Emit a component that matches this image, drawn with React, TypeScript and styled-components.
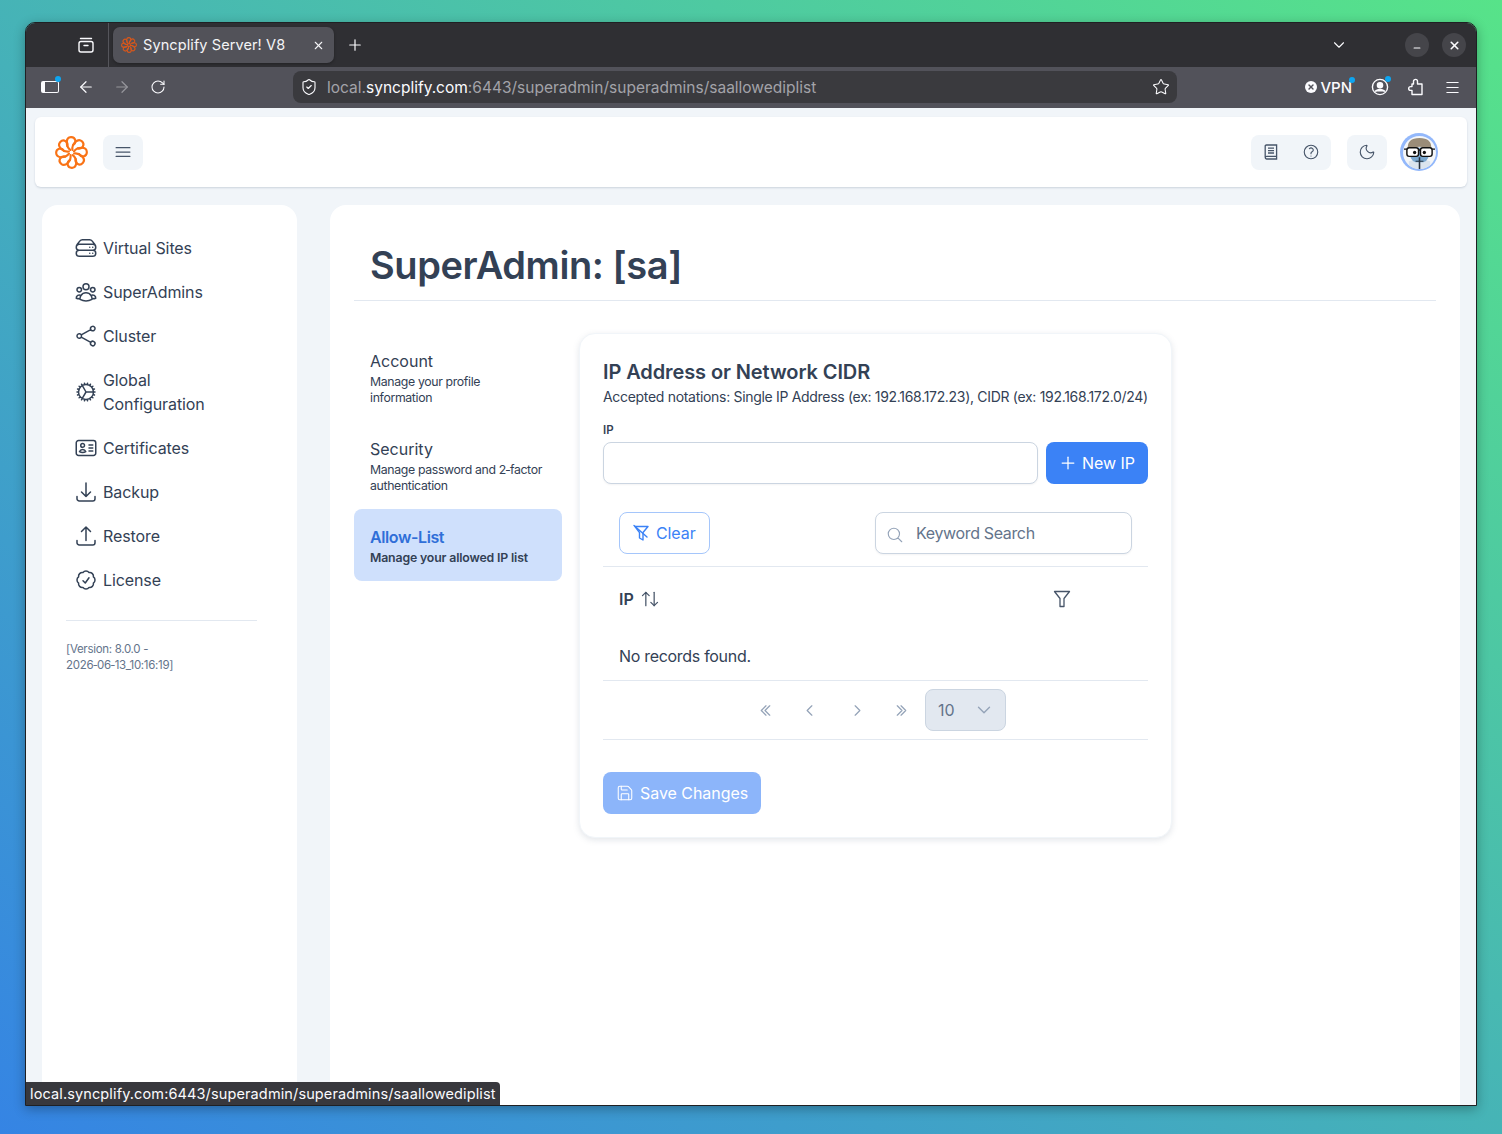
import React from 'react';
import styled, { createGlobalStyle } from 'styled-components';
import {
  ArrowLeft,
  ArrowRight,
  ArrowUpDown,
  ChevronDown,
  Menu,
  Minus,
  Moon,
  Plus,
  RotateCw,
  Save,
  ShieldCheck,
  Star,
  X,
} from 'lucide-react';
import {
  HiOutlineArrowDownTray,
  HiOutlineArrowUpTray,
  HiOutlineBars3,
  HiOutlineCheckBadge,
  HiOutlineChevronDoubleLeft,
  HiOutlineChevronDoubleRight,
  HiOutlineChevronLeft,
  HiOutlineChevronRight,
  HiOutlineCog,
  HiOutlineIdentification,
  HiOutlineMagnifyingGlass,
  HiOutlineQuestionMarkCircle,
  HiOutlineServerStack,
  HiOutlineShare,
  HiOutlineUserGroup,
} from 'react-icons/hi2';

const GlobalStyle = createGlobalStyle`
  html, body {
    margin: 0;
    padding: 0;
  }
  body {
    font-family: Inter, "Liberation Sans", sans-serif;
  }
`;

const Desktop = styled.div`
  box-sizing: border-box;
  width: 1502px;
  height: 1134px;
  padding: 22px 25px 28px;
  background: linear-gradient(to top right, #3584e4, #57e389);
`;

const Window = styled.div`
  position: relative;
  display: flex;
  flex-direction: column;
  height: 100%;
  border: 1px solid #1f2023;
  border-radius: 10px 10px 0 0;
  box-sizing: border-box;
  overflow: hidden;
  box-shadow: 0 3px 12px rgba(0, 0, 0, 0.3);
`;

const TabStrip = styled.div`
  display: flex;
  align-items: center;
  flex: 0 0 44px;
  padding-left: 51px;
  background: #2f2f33;
  color: #fbfbfe;
`;

const TabGroups = styled.div`
  display: flex;
  align-items: center;
  height: 100%;
  padding-right: 13px;
  border-right: 1px solid #55555b;
`;

const Tab = styled.div`
  display: flex;
  align-items: center;
  width: 221px;
  height: 36px;
  margin-left: 4px;
  padding: 0 9px 0 8px;
  box-sizing: border-box;
  border-radius: 7px;
  background: #525259;
  box-shadow: 0 1px 3px rgba(0, 0, 0, 0.3);
  font-size: 14.5px;
  color: #f4f4f6;
`;

const TabTitle = styled.span`
  flex: 1;
  margin-left: 6px;
  padding-bottom: 2px;
  letter-spacing: 0.1px;
`;

const NewTab = styled.div`
  display: flex;
  margin-left: 12px;
`;

const StripEnd = styled.div`
  display: flex;
  align-items: center;
  margin-left: auto;
  padding-right: 10px;
`;

const CaptionButton = styled.div`
  display: flex;
  align-items: center;
  justify-content: center;
  width: 24px;
  height: 24px;
  margin-left: 13px;
  border-radius: 50%;
  background: #45454a;
`;

const ListTabs = styled.div`
  display: flex;
  margin-right: 44px;
`;

const Toolbar = styled.div`
  display: flex;
  align-items: center;
  flex: 0 0 41px;
  box-sizing: border-box;
  padding: 0 14px 1px;
  background: #52525a;
  color: #fbfbfe;
`;

const NavGroup = styled.div`
  display: flex;
  align-items: center;
  gap: 16px;
`;

const NavIcon = styled.div<{ $dim?: boolean; $dot?: boolean }>`
  position: relative;
  display: flex;
  align-items: center;
  justify-content: center;
  width: 20px;
  height: 20px;
  opacity: ${({ $dim }) => ($dim ? 0.4 : 1)};
  &::after {
    content: '';
    display: ${({ $dot }) => ($dot ? 'block' : 'none')};
    position: absolute;
    top: -1px;
    right: -1px;
    width: 6px;
    height: 6px;
    border-radius: 50%;
    background: #0ea5f0;
  }
`;

const SidebarGlyph = styled.div`
  width: 13px;
  height: 10px;
  border: 1.6px solid #fbfbfe;
  border-left-width: 4px;
  border-radius: 2px;
`;

const UrlBar = styled.div`
  display: flex;
  align-items: center;
  width: 884px;
  height: 32px;
  margin-left: 125px;
  padding: 0 7px;
  box-sizing: border-box;
  border-radius: 8px;
  background: #3a3a3e;
  font-size: 15.5px;
  color: #fbfbfe;
`;

const UrlText = styled.div`
  flex: 1;
  margin-left: 9px;
  white-space: nowrap;
`;

const UrlDim = styled.span`
  color: #a3a3a9;
`;

const ToolbarEnd = styled.div`
  display: flex;
  align-items: center;
  margin-left: auto;
  gap: 16px;
`;

const VpnBadge = styled.div`
  position: relative;
  display: flex;
  align-items: center;
  gap: 3px;
  margin-right: 2px;
  font-size: 15px;
  font-weight: 500;
  &::after {
    content: '';
    position: absolute;
    top: -1px;
    right: -3px;
    width: 6px;
    height: 6px;
    border-radius: 50%;
    background: #0ea5f0;
  }
`;

const VpnMark = styled.span`
  display: flex;
  align-items: center;
  justify-content: center;
  width: 12px;
  height: 12px;
  border-radius: 50%;
  background: #fbfbfe;
  color: #52525a;
`;

const Content = styled.div`
  position: relative;
  flex: 1;
  min-height: 0;
  padding: 9px 9px 0;
  background: #f1f5f9;
  overflow: hidden;
  color: #334155;
`;

const TopBar = styled.header`
  display: flex;
  align-items: center;
  height: 70px;
  padding: 0 29px 0 20px;
  box-sizing: border-box;
  border-radius: 6px;
  background: #fff;
  box-shadow: 0 1px 2px rgba(100, 116, 139, 0.25);
`;

const IconTile = styled.div`
  display: flex;
  align-items: center;
  justify-content: center;
  height: 35px;
  min-width: 40px;
  border-radius: 8px;
  background: #f1f5f9;
  color: #475569;
`;

const LeftTile = styled(IconTile)`
  margin-left: 15px;
`;

const BarEnd = styled.div`
  display: flex;
  align-items: center;
  margin-left: auto;
  gap: 16px;
`;

const TileSlot = styled.div`
  display: flex;
  align-items: center;
  justify-content: center;
  width: 40px;
`;

const AvatarRing = styled.div`
  display: flex;
  width: 38px;
  height: 38px;
  margin-left: -3px;
  padding: 2.5px;
  box-sizing: border-box;
  border-radius: 50%;
  background: #93b8fb;
`;

const Panels = styled.div`
  display: flex;
  gap: 33px;
  height: 100%;
  margin-top: 18px;
  padding: 0 7px;
`;

const Sidebar = styled.aside`
  flex: 0 0 255px;
  box-sizing: border-box;
  padding: 21px 24px 0;
  border-radius: 16px 16px 0 0;
  background: #fff;
`;

const NavList = styled.nav`
  display: flex;
  flex-direction: column;
`;

const NavItem = styled.a`
  display: flex;
  align-items: center;
  gap: 5px;
  padding: 10px 0 10px 8px;
  font-size: 16px;
  line-height: 24px;
  letter-spacing: -0.1px;
  color: #334155;
`;

const NavGlyph = styled.span`
  display: flex;
  flex: none;
  width: 24px;
  color: #334155;
`;

const NavLabel = styled.span`
  width: 130px;
`;

const SideRule = styled.hr`
  width: 191px;
  margin: 18px 0 20px;
  border: 0;
  border-top: 1px solid #e2e8f0;
`;

const VersionNote = styled.div`
  width: 118px;
  font-size: 11.5px;
  line-height: 16px;
  letter-spacing: -0.3px;
  color: #64748b;
`;

const Main = styled.main`
  flex: 0 0 1130px;
  box-sizing: border-box;
  padding: 0 24px;
  border-radius: 16px 16px 0 0;
  background: #fff;
`;

const PageTitle = styled.h1`
  margin: 0;
  height: 96px;
  padding: 36px 16px 0;
  box-sizing: border-box;
  border-bottom: 1px solid #e2e8f0;
  font-size: 38px;
  font-weight: 600;
  line-height: 48px;
  letter-spacing: -0.42px;
  color: #334155;
`;

const Body = styled.div`
  display: flex;
  gap: 17px;
  margin-top: 32px;
`;

const SubMenu = styled.div`
  flex: 0 0 208px;
`;

const SubItem = styled.div<{ $active?: boolean }>`
  padding: 16px 16px 15px;
  border-radius: 8px;
  background: ${({ $active }) => ($active ? '#cfe0fc' : 'transparent')};
`;

const SubTitle = styled.div<{ $active?: boolean }>`
  font-size: 16px;
  line-height: 24px;
  font-weight: ${({ $active }) => ($active ? 600 : 400)};
  letter-spacing: ${({ $active }) => ($active ? '-0.4px' : '0')};
  color: ${({ $active }) => ($active ? '#2f6fd8' : '#334155')};
`;

const SubText = styled.div<{ $active?: boolean }>`
  max-width: 174px;
  margin-top: 1px;
  font-size: 12.3px;
  line-height: 16px;
  font-weight: ${({ $active }) => ($active ? 600 : 400)};
  letter-spacing: ${({ $active }) => ($active ? '-0.15px' : '-0.35px')};
  color: #334155;
`;

const Card = styled.section`
  flex: 0 0 593px;
  width: 593px;
  min-width: 0;
  box-sizing: border-box;
  padding: 23px;
  border: 1px solid #f1f5f9;
  border-radius: 16px;
  background: #fff;
  box-shadow: 0 2px 6px rgba(100, 116, 139, 0.18);
`;

const CardTitle = styled.h2`
  margin: 1px 0 0;
  font-size: 20px;
  font-weight: 600;
  line-height: 28px;
  letter-spacing: -0.1px;
  color: #334155;
`;

const CardNote = styled.p`
  margin: 0;
  font-size: 14px;
  line-height: 22px;
  letter-spacing: -0.31px;
  white-space: nowrap;
  color: #334155;
`;

const FieldLabel = styled.label`
  display: block;
  margin-top: 13px;
  font-size: 11.5px;
  font-weight: 600;
  line-height: 18px;
  color: #334155;
`;

const FieldRow = styled.div`
  display: flex;
  gap: 8px;
  margin-top: 3px;
`;

const TextInput = styled.input`
  flex: 1;
  min-width: 0;
  height: 42px;
  box-sizing: border-box;
  padding: 0 12px;
  border: 1px solid #cbd5e1;
  border-radius: 8px;
  background: #fff;
  box-shadow: 0 1px 2px rgba(15, 23, 42, 0.05);
  font: inherit;
  font-size: 16px;
  outline: none;
`;

const PrimaryButton = styled.button<{ $muted?: boolean }>`
  display: inline-flex;
  align-items: center;
  gap: ${({ $muted }) => ($muted ? '6px' : '4px')};
  height: 42px;
  padding: 0 13px 0 ${({ $muted }) => ($muted ? '13px' : '12px')};
  border: 0;
  border-radius: 8px;
  background: ${({ $muted }) => ($muted ? '#8cb5fa' : '#3b82f6')};
  color: #fff;
  font: inherit;
  font-size: 16px;
  letter-spacing: -0.05px;
`;

const TableTools = styled.div`
  display: flex;
  align-items: center;
  justify-content: space-between;
  height: 42px;
  margin-top: 28px;
  padding: 0 16px 12px;
  border-bottom: 1px solid #e2e8f0;
`;

const ClearButton = styled.button`
  display: inline-flex;
  align-items: center;
  gap: 6px;
  height: 42px;
  padding: 0 13px 0 12px;
  border: 1px solid #a5c6fb;
  border-radius: 8px;
  background: #fff;
  color: #3b82f6;
  font: inherit;
  font-size: 16px;
  letter-spacing: -0.1px;
`;

const SearchBox = styled.div`
  position: relative;
  width: 257px;
  color: #94a3b8;
`;

const SearchGlyph = styled.span`
  position: absolute;
  top: 14px;
  left: 11px;
  display: flex;
`;

const SearchInput = styled(TextInput)`
  width: 100%;
  padding-left: 40px;
  letter-spacing: -0.35px;
  &::placeholder {
    color: #64748b;
    opacity: 1;
  }
`;

const HeadRow = styled.div`
  display: flex;
  align-items: center;
  height: 63px;
  padding: 0 16px;
  font-size: 16px;
  font-weight: 600;
  color: #334155;
`;

const HeadLabel = styled.span`
  margin-right: 6px;
`;

const HeadFilter = styled.span`
  display: flex;
  margin-left: auto;
  margin-right: 61px;
  color: #475569;
`;

const EmptyRow = styled.div`
  height: 51px;
  padding: 14px 16px 0;
  box-sizing: border-box;
  border-bottom: 1px solid #e2e8f0;
  font-size: 16px;
  line-height: 24px;
  letter-spacing: -0.3px;
  color: #334155;
`;

const Pager = styled.div`
  display: flex;
  align-items: center;
  gap: 12px;
  height: 58px;
  padding-left: 146px;
  border-bottom: 1px solid #e2e8f0;
`;

const PagerButton = styled.span<{ $afterPages?: boolean }>`
  display: flex;
  align-items: center;
  justify-content: center;
  width: 32px;
  height: 32px;
  margin-left: ${({ $afterPages }) => ($afterPages ? '4px' : '0')};
  color: #94a3b8;
`;

const PageSize = styled.div`
  display: flex;
  align-items: center;
  justify-content: space-between;
  width: 81px;
  height: 42px;
  margin-left: -4px;
  padding: 0 10px 0 12px;
  box-sizing: border-box;
  border: 1px solid #cbd5e1;
  border-radius: 8px;
  background: #e2e8f0;
  font-size: 16px;
  color: #64748b;
`;

const SaveRow = styled.div`
  margin-top: 32px;
`;

const LinkStatus = styled.div`
  position: absolute;
  left: 0;
  bottom: 0;
  padding: 0 4px;
  height: 23px;
  border-radius: 0 4px 0 0;
  background: #38383d;
  color: #fbfbfe;
  font-size: 14.5px;
  line-height: 23px;
  letter-spacing: 0.125px;
  white-space: nowrap;
`;

const PETALS = [0, 45, 90, 135, 180, 225, 270, 315];

const Logo = ({ size, color, width }: { size: number; color: string; width: number }) => (
  <svg width={size} height={size} viewBox="-17 -17 34 34" fill="none" stroke={color} strokeWidth={width}>
    {PETALS.map((angle) => (
      <path
        key={angle}
        transform={`rotate(${angle})`}
        strokeLinecap="round"
        d="M-1.2 -2.6C-6 -6 -6.4 -15.6 -0.6 -15.8C4.4 -16 5.6 -10 1.6 -7.6"
      />
    ))}
  </svg>
);

const Avatar = () => (
  <svg width="33" height="33" viewBox="0 0 34 34">
    <clipPath id="avatar-clip">
      <circle cx="17" cy="17" r="17" />
    </clipPath>
    <g clipPath="url(#avatar-clip)">
      <rect width="34" height="34" fill="#f4f6f8" />
      <path d="M6 34V26Q17 22 28 26V34Z" fill="#dbe4ee" />
      <path d="M7 12Q6 25 13 27H21Q28 25 27 12Z" fill="#7aa8d0" />
      <path d="M5 13Q4 2 17 2Q30 2 29 13Q23 11 17 11Q11 11 5 13Z" fill="#9a8c78" />
      <rect x="4" y="12" width="12" height="9" rx="2.4" fill="#fff" stroke="#111" strokeWidth="1.5" />
      <rect x="18" y="12" width="12" height="9" rx="2.4" fill="#fff" stroke="#111" strokeWidth="1.5" />
      <path d="M1 13.5H4M30 13.5H33M16 14.5H18" stroke="#111" strokeWidth="1.5" />
      <circle cx="12" cy="17" r="1.7" fill="#111" />
      <circle cx="22" cy="17" r="1.7" fill="#111" />
      <path d="M17 22V34" stroke="#26323f" strokeWidth="1.6" />
      <path d="M13 26H21" stroke="#26323f" strokeWidth="1.2" />
    </g>
  </svg>
);

const TabGroupsIcon = () => (
  <svg width="18" height="18" viewBox="0 0 18 18" fill="none" stroke="#fbfbfe" strokeWidth="1.4">
    <rect x="2" y="5.5" width="14" height="10.5" rx="2" />
    <path d="M3.5 2.5H14.5M7 9.5H11" strokeLinecap="round" />
  </svg>
);

const ProfileIcon = () => (
  <svg width="18" height="18" viewBox="0 0 18 18" fill="none" stroke="#fbfbfe" strokeWidth="1.4">
    <circle cx="9" cy="9" r="7.6" />
    <circle cx="9" cy="7.2" r="2.6" fill="#fbfbfe" />
    <path d="M4 13.4Q9 9.6 14 13.4" fill="#fbfbfe" />
  </svg>
);

const PuzzleIcon = () => (
  <svg width="18" height="18" viewBox="0 0 18 18" fill="none" stroke="#fbfbfe" strokeWidth="1.4" strokeLinejoin="round">
    <path d="M6.5 6V3.4A2 2 0 0 1 10.5 3.4V6H15V16.5H5V12.4H3.6A1.9 1.9 0 0 1 3.6 8.6H5V6Z" />
  </svg>
);

const BookIcon = () => (
  <svg width="18" height="18" viewBox="0 0 18 18" fill="none" stroke="#475569" strokeWidth="1.3">
    <path d="M3.2 14V3.2Q3.2 2 4.4 2H14.6V16H4.6Q3.2 16 3.2 14.6Q3.2 13.4 4.6 13.4H14.6" />
    <path d="M6 5.2H12M6 7.6H12M6 10H12" />
  </svg>
);

const ClearFilterIcon = () => (
  <svg width="18" height="18" viewBox="0 0 18 18" fill="none" stroke="#3b82f6" strokeWidth="1.4" strokeLinejoin="round">
    <path d="M3 2.5H16L11 8.5V16L7.5 14V8.5Z" />
    <path d="M2 1.5L15 13" strokeLinecap="round" />
  </svg>
);

const ColumnFilterIcon = () => (
  <svg width="18" height="18" viewBox="0 0 18 18" fill="none" stroke="#475569" strokeWidth="1.3" strokeLinejoin="round">
    <path d="M1.5 1.5H16.5L11 8.5V16.5H7V8.5Z" />
  </svg>
);

const navItems = [
  { label: 'Virtual Sites', icon: HiOutlineServerStack },
  { label: 'SuperAdmins', icon: HiOutlineUserGroup },
  { label: 'Cluster', icon: HiOutlineShare },
  { label: 'Global Configuration', icon: HiOutlineCog },
  { label: 'Certificates', icon: HiOutlineIdentification },
  { label: 'Backup', icon: HiOutlineArrowDownTray },
  { label: 'Restore', icon: HiOutlineArrowUpTray },
  { label: 'License', icon: HiOutlineCheckBadge },
];

const subItems = [
  { title: 'Account', text: 'Manage your profile information' },
  { title: 'Security', text: 'Manage password and 2\u2011factor authentication' },
  { title: 'Allow-List', text: 'Manage your allowed IP list', active: true },
];

const App = () => (
  <>
    <GlobalStyle />
    <Desktop>
      <Window>
        <TabStrip>
          <TabGroups>
            <TabGroupsIcon />
          </TabGroups>
          <Tab>
            <Logo size={16} color="#d9571a" width={2.4} />
            <TabTitle>Syncplify Server! V8</TabTitle>
            <X size={13} />
          </Tab>
          <NewTab>
            <Plus size={18} strokeWidth={1.6} />
          </NewTab>
          <StripEnd>
            <ListTabs>
              <ChevronDown size={18} strokeWidth={1.5} />
            </ListTabs>
            <CaptionButton>
              <Minus size={10} strokeWidth={2.6} style={{ marginTop: 5 }} />
            </CaptionButton>
            <CaptionButton>
              <X size={13} strokeWidth={3} />
            </CaptionButton>
          </StripEnd>
        </TabStrip>
        <Toolbar>
          <NavGroup>
            <NavIcon $dot>
              <SidebarGlyph />
            </NavIcon>
            <NavIcon>
              <ArrowLeft size={18} strokeWidth={1.6} />
            </NavIcon>
            <NavIcon $dim>
              <ArrowRight size={18} strokeWidth={1.6} />
            </NavIcon>
            <NavIcon>
              <RotateCw size={16} strokeWidth={1.6} />
            </NavIcon>
          </NavGroup>
          <UrlBar>
            <ShieldCheck size={18} strokeWidth={1.5} />
            <UrlText>
              <UrlDim>local.</UrlDim>syncplify.com<UrlDim>:6443/superadmin/superadmins/saallowediplist</UrlDim>
            </UrlText>
            <Star size={18} strokeWidth={1.4} />
          </UrlBar>
          <ToolbarEnd>
            <VpnBadge>
              <VpnMark>
                <X size={8} strokeWidth={4} />
              </VpnMark>
              VPN
            </VpnBadge>
            <NavIcon $dot>
              <ProfileIcon />
            </NavIcon>
            <NavIcon>
              <PuzzleIcon />
            </NavIcon>
            <NavIcon>
              <Menu size={17} strokeWidth={1.5} />
            </NavIcon>
          </ToolbarEnd>
        </Toolbar>
        <Content>
          <TopBar>
            <Logo size={33} color="#f97316" width={2.2} />
            <LeftTile>
              <HiOutlineBars3 size={20} />
            </LeftTile>
            <BarEnd>
              <IconTile>
                <TileSlot>
                  <BookIcon />
                </TileSlot>
                <TileSlot>
                  <HiOutlineQuestionMarkCircle size={18} />
                </TileSlot>
              </IconTile>
              <IconTile>
                <Moon size={18} strokeWidth={1.5} />
              </IconTile>
              <AvatarRing>
                <Avatar />
              </AvatarRing>
            </BarEnd>
          </TopBar>
          <Panels>
            <Sidebar>
              <NavList>
                {navItems.map(({ label, icon: Icon }) => (
                  <NavItem key={label}>
                    <NavGlyph>
                      <Icon size={24} />
                    </NavGlyph>
                    <NavLabel>{label}</NavLabel>
                  </NavItem>
                ))}
              </NavList>
              <SideRule />
              <VersionNote>[Version: 8.0.0 - 2026&#8209;06&#8209;13_10:16:19]</VersionNote>
            </Sidebar>
            <Main>
              <PageTitle>SuperAdmin: [sa]</PageTitle>
              <Body>
                <SubMenu>
                  {subItems.map((item) => (
                    <SubItem key={item.title} $active={item.active}>
                      <SubTitle $active={item.active}>{item.title}</SubTitle>
                      <SubText $active={item.active}>{item.text}</SubText>
                    </SubItem>
                  ))}
                </SubMenu>
                <Card>
                  <CardTitle>IP Address or Network CIDR</CardTitle>
                  <CardNote>
                    Accepted notations: Single IP Address (ex: 192.168.172.23), CIDR (ex: 192.168.172.0/24)
                  </CardNote>
                  <FieldLabel>IP</FieldLabel>
                  <FieldRow>
                    <TextInput />
                    <PrimaryButton>
                      <Plus size={20} strokeWidth={1.5} />
                      New IP
                    </PrimaryButton>
                  </FieldRow>
                  <TableTools>
                    <ClearButton>
                      <ClearFilterIcon />
                      Clear
                    </ClearButton>
                    <SearchBox>
                      <SearchGlyph>
                        <HiOutlineMagnifyingGlass size={18} />
                      </SearchGlyph>
                      <SearchInput placeholder="Keyword Search" />
                    </SearchBox>
                  </TableTools>
                  <HeadRow>
                    <HeadLabel>IP</HeadLabel>
                    <ArrowUpDown size={20} strokeWidth={1.5} color="#475569" />
                    <HeadFilter>
                      <ColumnFilterIcon />
                    </HeadFilter>
                  </HeadRow>
                  <EmptyRow>No records found.</EmptyRow>
                  <Pager>
                    <PagerButton>
                      <HiOutlineChevronDoubleLeft size={15} strokeWidth={2} />
                    </PagerButton>
                    <PagerButton>
                      <HiOutlineChevronLeft size={15} strokeWidth={2} />
                    </PagerButton>
                    <PagerButton $afterPages>
                      <HiOutlineChevronRight size={15} strokeWidth={2} />
                    </PagerButton>
                    <PagerButton>
                      <HiOutlineChevronDoubleRight size={15} strokeWidth={2} />
                    </PagerButton>
                    <PageSize>
                      10
                      <ChevronDown size={22} strokeWidth={1.5} color="#94a3b8" />
                    </PageSize>
                  </Pager>
                  <SaveRow>
                    <PrimaryButton $muted>
                      <Save size={18} strokeWidth={1.4} />
                      Save Changes
                    </PrimaryButton>
                  </SaveRow>
                </Card>
              </Body>
            </Main>
          </Panels>
          <LinkStatus>local.syncplify.com:6443/superadmin/superadmins/saallowediplist</LinkStatus>
        </Content>
      </Window>
    </Desktop>
  </>
);

export default App;
